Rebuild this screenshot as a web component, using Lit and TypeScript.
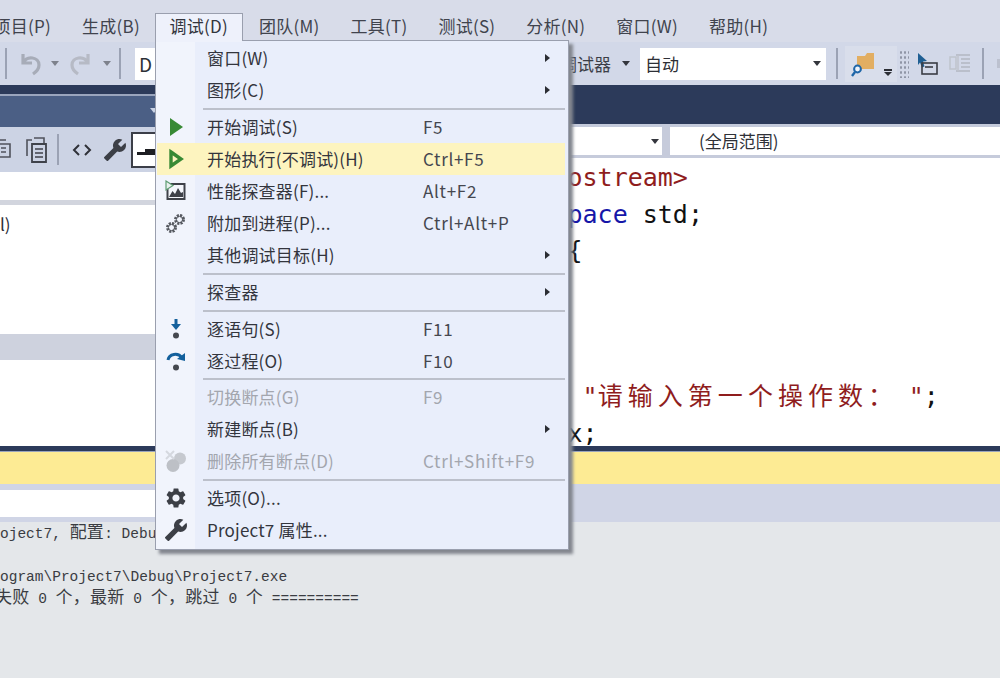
import { LitElement, html, css, svg } from "lit";
import { customElement } from "lit/decorators.js";

const WRENCH = "M22.7 19l-9.1-9.1c.9-2.3.4-5-1.5-6.9-2-2-5-2.4-7.4-1.3L9 6 6 9 1.6 4.7C.4 7.1.9 10.1 2.9 12.1c1.9 1.9 4.6 2.4 6.9 1.5l9.1 9.1c.4.4 1 .4 1.4 0l2.3-2.3c.5-.4.5-1.1.1-1.4z";
const GEAR = "M19.14 12.94c.04-.3.06-.61.06-.94 0-.32-.02-.64-.07-.94l2.03-1.58a.49.49 0 0 0 .12-.61l-1.92-3.32a.488.488 0 0 0-.59-.22l-2.39.96c-.5-.38-1.03-.7-1.62-.94l-.36-2.54a.484.484 0 0 0-.48-.41h-3.84c-.24 0-.43.17-.47.41l-.36 2.54c-.59.24-1.13.57-1.62.94l-2.39-.96c-.22-.08-.47 0-.59.22L2.74 8.87c-.12.21-.08.47.12.61l2.03 1.58c-.05.3-.09.63-.09.94s.02.64.07.94l-2.03 1.58a.49.49 0 0 0-.12.61l1.92 3.32c.12.22.37.29.59.22l2.39-.96c.5.38 1.03.7 1.62.94l.36 2.54c.05.24.24.41.48.41h3.84c.24 0 .44-.17.47-.41l.36-2.54c.59-.24 1.13-.56 1.62-.94l2.39.96c.22.08.47 0 .59-.22l1.92-3.32c.12-.22.07-.47-.12-.61l-2.01-1.58zM12 15.6c-1.98 0-3.6-1.62-3.6-3.6s1.62-3.6 3.6-3.6 3.6 1.62 3.6 3.6-1.62 3.6-3.6 3.6z";

const ico = (w: number, h: number, body: unknown) =>
  html`<svg width=${w} height=${h} viewBox="0 0 ${w} ${h}">${body}</svg>`;

const icons: Record<string, unknown> = {
  play: ico(24, 24, svg`<polygon points="6,3 19,12 6,21" fill="#388a34"/>`),
  run: ico(24, 24, svg`<polygon points="7,5 17,12 7,19" fill="none" stroke="#388a34" stroke-width="3.4"/>`),
  perf: ico(24, 24, svg`
    <rect x="3.5" y="5" width="17" height="15" fill="#f4f6fb" stroke="#3e4148" stroke-width="2"/>
    <path d="M5 18l3.5-6 2.5 3 3-6 3 5 2-1v5z" fill="#3e4148"/>
    <polygon points="2,2 9,6.5 2,11" fill="#e9f0ee" stroke="#5f9d72" stroke-width="1.2"/>`),
  attach: ico(24, 24, svg`
    <circle cx="15.5" cy="8.5" r="4" fill="none" stroke="#55585f" stroke-width="3" stroke-dasharray="2 1.15"/>
    <circle cx="15.5" cy="8.5" r="3.2" fill="none" stroke="#55585f" stroke-width="1"/>
    <circle cx="7.5" cy="16.5" r="4" fill="none" stroke="#55585f" stroke-width="3" stroke-dasharray="2 1.15"/>
    <circle cx="7.5" cy="16.5" r="3.2" fill="none" stroke="#55585f" stroke-width="1"/>`),
  into: ico(24, 24, svg`
    <path d="M12 2v8" stroke="#14609c" stroke-width="3" fill="none"/>
    <path d="M7 7l5 6 5-6z" fill="#14609c"/>
    <circle cx="12" cy="18.5" r="3" fill="#45484f"/>`),
  over: ico(24, 24, svg`
    <path d="M4 11c1-6 10-8 14-2" stroke="#14609c" stroke-width="3" fill="none"/>
    <path d="M13 10l8 2 0-8z" fill="#14609c"/>
    <circle cx="12" cy="18.5" r="3" fill="#45484f"/>`),
  clear: ico(24, 24, svg`
    <circle cx="16" cy="9.5" r="6" fill="#c6c9cf"/>
    <circle cx="9" cy="16.5" r="6.5" fill="#bdc0c6"/>
    <path d="M2 2l8 8M10 2l-8 8" stroke="#d5d8df" stroke-width="2"/>`),
  gear: ico(24, 24, svg`<path d=${GEAR} fill="#3c3f46"/>`),
  wrench: html`<svg class="mirror" width="24" height="24" viewBox="0 0 24 24"><path d=${WRENCH} fill="#3c3f46"/></svg>`,
};

type Item = { t?: string; k?: string; i?: string; a?: boolean; d?: boolean; h?: boolean; sep?: boolean; thin?: boolean };
const items: Item[] = [
  { t: "窗口(W)", a: true },
  { t: "图形(C)", a: true },
  { sep: true },
  { t: "开始调试(S)", k: "F5", i: "play" },
  { t: "开始执行(不调试)(H)", k: "Ctrl+F5", i: "run", h: true },
  { t: "性能探查器(F)...", k: "Alt+F2", i: "perf" },
  { t: "附加到进程(P)...", k: "Ctrl+Alt+P", i: "attach" },
  { t: "其他调试目标(H)", a: true },
  { sep: true },
  { t: "探查器", a: true },
  { sep: true },
  { t: "逐语句(S)", k: "F11", i: "into" },
  { t: "逐过程(O)", k: "F10", i: "over" },
  { sep: true, thin: true },
  { t: "切换断点(G)", k: "F9", d: true },
  { t: "新建断点(B)", a: true },
  { t: "删除所有断点(D)", k: "Ctrl+Shift+F9", i: "clear", d: true },
  { sep: true },
  { t: "选项(O)...", i: "gear" },
  { t: "Project7 属性...", i: "wrench" },
];

@customElement("app-root")
export class AppRoot extends LitElement {
  static styles = css`
    :host {
      display: block; position: relative; width: 1000px; height: 678px; overflow: hidden;
      background: #e4e7ea; color: #2b2d36;
      font-family: "Noto Sans CJK SC", "Noto Sans", sans-serif; font-size: 17px;
    }
    svg { display: block; }
    .mirror { transform: scaleX(-1); }

    .menubar { height: 42px; background: #d8dce9; display: flex; align-items: flex-end; margin-left: -22px; color: #40434d; letter-spacing: 0.25px; }
    .mi { height: 28px; line-height: 24px; padding: 0 15.5px; white-space: nowrap; box-sizing: border-box; }
    .mi.on { width: 88px; padding: 0 13px; margin: 0 0 1px; height: 28px; background: #eef1fb; border: 1px solid #9a9fae; border-bottom: 0; color: #33353d; }

    .toolbar { height: 43px; background: #d2d8e8; display: flex; align-items: center; }
    .tsep { width: 2px; height: 31px; background: #9ba2b4; flex: none; }
    .caret { width: 0; height: 0; border: 4.5px solid transparent; border-top: 5px solid #7e828c; border-bottom: 0; flex: none; }
    .caret.dark { border-top-color: #34363d; }
    .s1 { margin-left: 5px; }
    .undo { margin-left: 13px; flex: none; }
    .c-a { margin-left: 9px; }
    .redo { margin-left: 9px; flex: none; }
    .c-b { margin-left: 13px; }
    .s-b { margin-left: 8px; }
    .combo { background: #fff; height: 32px; line-height: 32px; box-sizing: border-box; flex: none; color: #2d2f36; }
    .c1 { width: 300px; padding-left: 4px; margin-left: 14px; font-size: 19px; }
    .dbg { margin-left: 125px; width: 54px; flex: none; white-space: nowrap; color: #3c3e47; }
    .t-caret { margin-left: 8px; }
    .c2 { width: 186px; margin-left: 10px; padding: 0 5px; display: flex; align-items: center; justify-content: space-between; }
    .s-c { margin-left: 10px; }
    .hover { margin-left: 7px; width: 52px; height: 36px; background: #d9deeb; display: flex; align-items: center; flex: none; }
    .hover svg { margin-left: 6px; flex: none; }
    .more { display: flex; flex-direction: column; align-items: center; gap: 1px; margin: 18px 0 0 9px; }
    .more i { display: block; width: 8px; height: 2px; background: #2c2e35; }
    .more b { display: block; width: 0; height: 0; border: 4px solid transparent; border-top: 4px solid #2c2e35; border-bottom: 0; }
    .grip { margin-left: 2px; width: 10px; height: 28px; flex: none; background-image: radial-gradient(circle, #8f95a6 1px, transparent 1.4px); background-size: 4px 5px; }
    .ti1 { margin-left: 8px; flex: none; }
    .ti2 { margin-left: 10px; flex: none; }
    .s-d { margin-left: 10px; }
    .faint { margin-left: 13px; width: 3px; height: 9px; background: #bcc1cf; flex: none; }

    .main { display: flex; height: 361px; }
    .left { width: 160px; flex: none; display: flex; flex-direction: column; }
    .right { flex: 1; display: flex; flex-direction: column; min-width: 0; }
    .l-navy { height: 9px; background: #2c3a5a; flex: none; }
    .l-gap { height: 2px; background: #9aa5bd; flex: none; }
    .l-tab { height: 31px; background: #4b5f85; flex: none; display: flex; align-items: flex-start; }
    .l-tab i { display: block; margin: 12px 0 0 150px; width: 0; height: 0; border: 4px solid transparent; border-top: 5px solid #c9d2e4; border-bottom: 0; }
    .l-tools { height: 45px; background: #ccd3e4; display: flex; align-items: center; flex: none; }
    .copy { flex: none; }
    .paste { margin-left: 11px; flex: none; }
    .s-p { margin-left: 9px; }
    .code { margin-left: 13px; flex: none; }
    .wr { margin-left: 11px; flex: none; }
    .box { margin-left: 4px; width: 33px; height: 36px; border: 2px solid #3c3f48; border-right: 0; box-sizing: border-box; background: #fff; flex: none; }
    .l-white { background: #fff; flex: none; }
    .w1 { height: 28px; } .w2 { height: 5px; background: #d2d5de; } .w3 { height: 129px; line-height: 38px; color: #2b2d36; }
    .w4 { height: 26px; background: #ced2de; } .w5 { height: 86px; }
    .r-navy { height: 39px; background: #2c3a5a; flex: none; }
    .r-gap { height: 3px; background: #c4cadb; flex: none; }
    .r-row { height: 28px; display: flex; background: #fff; flex: none; align-items: stretch; }
    .d1 { width: 502px; display: flex; align-items: center; justify-content: flex-end; padding-right: 3px; box-sizing: border-box; flex: none; }
    .d-sep { width: 8px; background: #c6cbdb; flex: none; }
    .d2 { padding-left: 29px; line-height: 28px; color: #2f3138; }
    .r-gap2 { height: 3px; background: #c6cbdb; flex: none; }
    .editor { flex: 1; background: #fff; padding: 2px 0 0 407.5px; font: 25px/36.5px "DejaVu Sans Mono", monospace; color: #111; white-space: pre; overflow: hidden; }
    .red { color: #8f1d1d; } .blue { color: #1616a8; }
    .cjk { font-family: "Noto Sans CJK SC", sans-serif; letter-spacing: 5.05px; line-height: 0; }

    .b-navy { height: 6px; background: #2c3a5a; border-bottom: 1px solid #9aa5bd; box-sizing: border-box; }
    .b-yellow { height: 32px; background: #fdeb94; }
    .b-strip { height: 38px; background: #d0d5e6; padding-top: 6px; box-sizing: border-box; }
    .b-input { width: 160px; height: 27px; background: #fff; }
    .output { padding-top: 2px; font: 14.5px/21.5px "Liberation Mono", "Noto Sans CJK SC", monospace; color: #3a3c42; white-space: pre; }
    .output .blank { height: 21.5px; }
    .output .zh { font-size: 17px; letter-spacing: 0.25px; line-height: 0; font-family: "Noto Sans CJK SC", sans-serif; }
    .output .pull { margin-left: -5px; }

    .menu {
      position: absolute; left: 155px; top: 40px; width: 414px; height: 510px; box-sizing: border-box;
      padding: 1px 3px 0 1px; border: 1px solid #9a9fae;
      background: linear-gradient(to right, #f1f4fc 39px, #e9eefb 39px);
      box-shadow: 4px 4px 3px #83878f;
      color: #33353d;
    }
    .cover { position: absolute; left: 156px; top: 39px; width: 86px; height: 3px; background: #eef1fb; }
    .row { display: grid; grid-template-columns: 39px 11px 216px 122px 1fr; height: 32px; align-items: center; white-space: nowrap; }
    .row.h { background: #fdf4bf; }
    .row.d { color: #a3a6ae; }
    .row svg { margin-left: 7px; }
    .row .ic { grid-column: 1; }
    .row .lb { grid-column: 3; margin-bottom: 2px; letter-spacing: 0.2px; }
    .row .ks { grid-column: 4; margin-bottom: 2px; letter-spacing: 0.7px; color: #45474f; white-space: nowrap; }
    .row.d .ks { color: #a3a6ae; }
    .row .ar { grid-column: 5; width: 0; height: 0; border: 4.5px solid transparent; border-left: 5px solid #2b2d33; border-right: 0; }
    .sep { height: 5px; display: flex; align-items: center; padding-left: 46px; }
    .sep.thin { height: 4px; }
    .sep i { display: block; height: 2px; flex: 1; background: #bcc0cb; }
  `;

  render() {
    return html`
      <div class="menubar">
        ${["项目(P)", "生成(B)"].map((m) => html`<div class="mi">${m}</div>`)}
        <div class="mi on">调试(D)</div>
        ${["团队(M)", "工具(T)", "测试(S)", "分析(N)", "窗口(W)", "帮助(H)"].map((m) => html`<div class="mi">${m}</div>`)}
      </div>

      <div class="toolbar">
        <div class="tsep s1"></div>
        <svg class="undo" width="22" height="24" viewBox="0 0 22 24"><path d="M3 2v9h9M3 11C7 3 19 5 19 13c0 4-3 7-6 9" fill="none" stroke="#a7acb8" stroke-width="3.2"/></svg>
        <div class="caret c-a"></div>
        <svg class="redo" width="22" height="24" viewBox="0 0 22 24"><path d="M20 2v9h-9M20 11C16 3 4 5 4 13c0 4 3 7 6 9" fill="none" stroke="#b6bac5" stroke-width="3.2"/></svg>
        <div class="caret c-b"></div>
        <div class="tsep s-b"></div>
        <div class="combo c1">D</div>
        <div class="dbg">调试器</div>
        <div class="caret dark t-caret"></div>
        <div class="combo c2"><span>自动</span><div class="caret dark"></div></div>
        <div class="tsep s-c"></div>
        <div class="hover">
          <svg width="24" height="28" viewBox="0 0 24 28">
            <path d="M6 6h8l2-3h7v16H6z" fill="#e2ae62"/>
            <circle cx="6.500" cy="19" r="3.4" fill="#eef3fb" stroke="#1f66a8" stroke-width="2"/>
            <path d="M4 22l-3 4" stroke="#1f66a8" stroke-width="2.4"/>
          </svg>
          <div class="more"><i></i><b></b></div>
        </div>
        <div class="grip"></div>
        <svg class="ti1" width="22" height="26" viewBox="0 0 22 26">
          <path d="M1 2l9 8-4 .5 1.500 5-2.500 1-2-5-2 2.500z" fill="#1f5f93"/>
          <rect x="5" y="12" width="15" height="11" fill="none" stroke="#3a3c44" stroke-width="1.600"/>
          <path d="M8 16h8" stroke="#3a3c44" stroke-width="1.600"/>
        </svg>
        <svg class="ti2" width="23" height="26" viewBox="0 0 23 26">
          <path d="M7 4h14M12 8h9M12 12h9M12 16h9M7 20h14" stroke="#b3b7c1" stroke-width="1.500"/>
          <rect x="1" y="6" width="6" height="12" fill="none" stroke="#bfc3cc" stroke-width="1.500"/>
          <path d="M9 4v16" stroke="#bfc3cc" stroke-width="1.500"/>
        </svg>
        <div class="tsep s-d"></div>
        <div class="faint"></div>
      </div>

      <div class="main">
        <div class="left">
          <div class="l-navy"></div><div class="l-gap"></div><div class="l-tab"><i></i></div>
          <div class="l-tools">
            <svg class="copy" width="14" height="24" viewBox="0 0 14 24"><path d="M-4 6h14v13H-4zM-8 2h14" fill="none" stroke="#50535c" stroke-width="1.600"/><path d="M1 10h5M1 14h5" stroke="#50535c" stroke-width="1.400"/></svg>
            <svg class="paste" width="23" height="28" viewBox="0 0 23 28"><path d="M2 20V4h5M9 2h10v5" fill="none" stroke="#50535c" stroke-width="1.600"/><path d="M7 8h14v18H7z" fill="none" stroke="#3f424a" stroke-width="1.800"/><path d="M10 13h8M10 17h8M10 21h8" stroke="#3f424a" stroke-width="1.500"/></svg>
            <div class="tsep s-p"></div>
            <svg class="code" width="20" height="16" viewBox="0 0 20 16"><path d="M7 3L2 8l5 5M13 3l5 5-5 5" fill="none" stroke="#2f3138" stroke-width="2"/></svg>
            <svg class="mirror wr" width="24" height="24" viewBox="0 0 24 24"><path d=${WRENCH} fill="#3c3f46"/></svg>
            <div class="box"><svg width="31" height="32" viewBox="0 0 31 32"><path d="M4 18h20v3H4zM12 15h12v3H12z" fill="#1d1e22"/></svg></div>
          </div>
          <div class="l-white w1"></div><div class="l-white w2"></div>
          <div class="l-white w3">l)</div>
          <div class="l-white w4"></div><div class="l-white w5"></div>
        </div>
        <div class="right">
          <div class="r-navy"></div><div class="r-gap"></div>
          <div class="r-row">
            <div class="d1"><div class="caret dark"></div></div>
            <div class="d-sep"></div>
            <div class="d2">(全局范围)</div>
          </div>
          <div class="r-gap2"></div>
          <div class="editor"><span class="red">ostream&gt;</span>
<span class="blue">pace</span> std;
{



 <span class="red">"<span class="cjk">请输入第一个操作数： </span>"</span>;
x;</div>
        </div>
      </div>

      <div class="b-navy"></div>
      <div class="b-yellow"></div>
      <div class="b-strip"><div class="b-input"></div></div>
      <div class="output"><div>oject7, <span class="zh">配置</span>: Debu</div><div class="blank"></div><div>ogram\\Project7\\Debug\\Project7.exe</div><div class="pull"><span class="zh">失败</span> 0 <span class="zh">个，最新</span> 0 <span class="zh">个，跳过</span> 0 <span class="zh">个</span> ==========</div></div>

      <div class="menu">
        ${items.map((it) =>
          it.sep
            ? html`<div class="sep ${it.thin ? "thin" : ""}"><i></i></div>`
            : html`<div class="row ${it.h ? "h" : ""} ${it.d ? "d" : ""}">
                <div class="ic">${it.i ? icons[it.i] : ""}</div>
                <div class="lb">${it.t}</div>
                ${it.k ? html`<div class="ks">${it.k}</div>` : ""}
                ${it.a ? html`<div class="ar"></div>` : ""}
              </div>`
        )}
      </div>
      <div class="cover"></div>
    `;
  }
}
